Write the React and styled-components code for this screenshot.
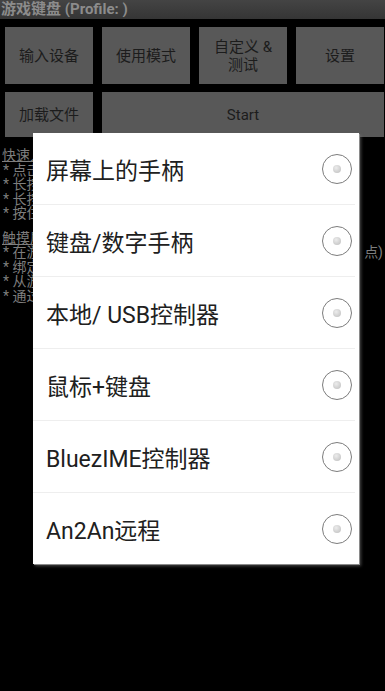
import React from 'react';
import styled, { createGlobalStyle } from 'styled-components';

const GlobalStyle = createGlobalStyle`
  html, body {
    margin: 0;
    padding: 0;
    background: #000;
  }
  body {
    font-family: Roboto, "Noto Sans CJK SC", sans-serif;
  }
`;

const Screen = styled.div`
  position: relative;
  width: 385px;
  height: 691px;
  background: #000;
  overflow: hidden;
`;

const TitleBar = styled.div`
  height: 19px;
  background: linear-gradient(#444, #353535);
  color: #8c8c8c;
  font-size: 15px;
  font-weight: 700;
  line-height: 19px;
  padding-left: 1px;
  white-space: nowrap;
  overflow: hidden;
`;

const ButtonGrid = styled.div`
  display: grid;
  grid-template-columns: repeat(4, 88px);
  grid-template-rows: 57px 45px;
  column-gap: 9px;
  row-gap: 8px;
  padding: 8px 1px 0 5px;
`;

const Button = styled.div`
  grid-column: ${(p) => p.$span || 'auto'};
  background: #585858;
  color: #1c1c1c;
  font-size: 15px;
  line-height: 18px;
  display: flex;
  align-items: center;
  justify-content: center;
  text-align: center;
`;

const Help = styled.div`
  padding: 11px 2px 0 2px;
  color: #7e7e7e;
  font-size: 14px;
  line-height: 14.5px;
`;

const HelpHeading = styled.div`
  text-decoration: underline;
  margin-top: ${(p) => (p.$gap ? '10px' : '0')};
`;

const HelpLine = styled.div`
  display: flex;
  justify-content: space-between;
  white-space: nowrap;
  padding-left: 1px;
`;

const Dialog = styled.div`
  position: absolute;
  left: 33px;
  top: 133px;
  width: 326px;
  background: #fff;
  box-shadow: 1px 1px 0 #8a8a8a, 2px 2px 3px rgba(120, 120, 120, 0.6);
`;

const Option = styled.div`
  height: 71px;
  display: flex;
  align-items: center;
  justify-content: space-between;
  padding: 0 3px 0 13px;
  border-top: ${(p) => (p.$first ? 'none' : '1px solid #eeeeee')};
  margin: 0 4px 0 0;
  color: #202020;
  font-size: 23px;
`;

const Radio = styled.div`
  width: 28px;
  height: 28px;
  border: 1.6px solid #7c7c7c;
  border-radius: 50%;
  display: flex;
  align-items: center;
  justify-content: center;

  &::after {
    content: '';
    width: 8px;
    height: 8px;
    border-radius: 50%;
    background: radial-gradient(circle at 40% 35%, #ececec, #bdbdbd);
  }
`;

const options = [
  '屏幕上的手柄',
  '键盘/数字手柄',
  '本地/ USB控制器',
  '鼠标+键盘',
  'BluezIME控制器',
  'An2An远程',
];

export default function App() {
  return (
    <Screen>
      <GlobalStyle />
      <TitleBar>游戏键盘 (Profile: )</TitleBar>
      <ButtonGrid>
        <Button>输入设备</Button>
        <Button>使用模式</Button>
        <Button>
          自定义 &amp;
          <br />
          测试
        </Button>
        <Button>设置</Button>
        <Button>加载文件</Button>
        <Button $span="2 / span 3">Start</Button>
      </ButtonGrid>
      <Help>
        <HelpHeading>快速入门</HelpHeading>
        <HelpLine>* 点击输入设备选择控制器</HelpLine>
        <HelpLine>* 长按按键可以重新映射</HelpLine>
        <HelpLine>* 长按屏幕可以编辑布局</HelpLine>
        <HelpLine>* 按住返回键退出</HelpLine>
        <HelpHeading $gap>触摸屏模式</HelpHeading>
        <HelpLine>
          <span>* 在游戏画面上映射触摸</span>
          <span>点)</span>
        </HelpLine>
        <HelpLine>* 绑定按键到屏幕位置</HelpLine>
        <HelpLine>* 从游戏中获取坐标</HelpLine>
        <HelpLine>* 通过悬浮窗切换配置</HelpLine>
      </Help>
      <Dialog>
        {options.map((o, i) => (
          <Option key={o} $first={i === 0}>
            <span>{o}</span>
            <Radio />
          </Option>
        ))}
      </Dialog>
    </Screen>
  );
}
